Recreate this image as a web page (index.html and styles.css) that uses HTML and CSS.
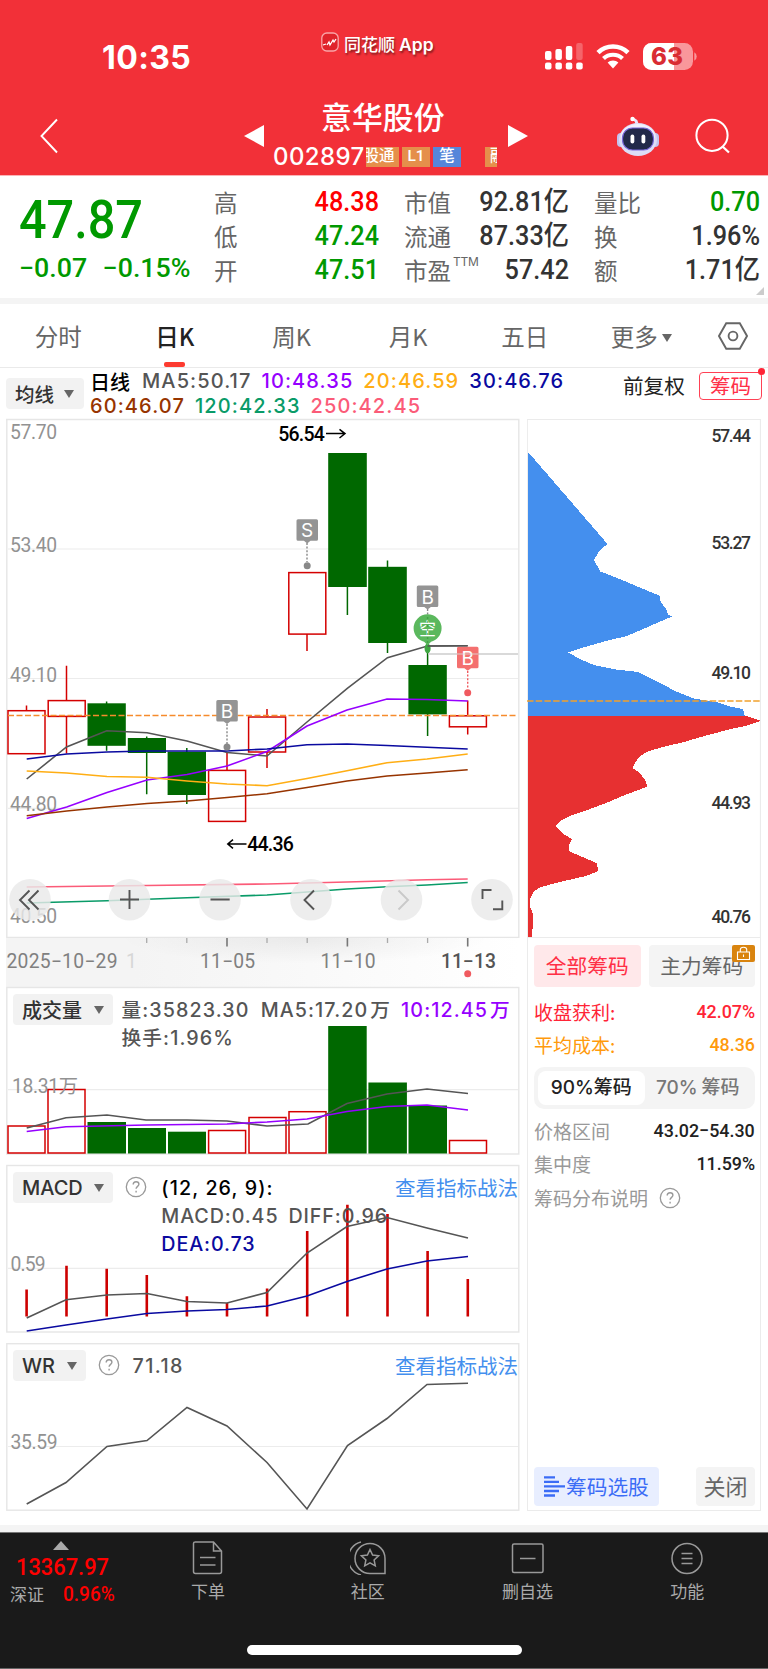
FILE: index.html
```html
<!DOCTYPE html>
<html lang="zh-CN">
<head>
<meta charset="UTF-8">
<meta name="viewport" content="width=device-width, initial-scale=1">
<title>意华股份 002897</title>
<link rel="stylesheet" href="styles.css">
</head>
<body>
<svg class="defs" width="0" height="0">
	<symbol id="help" viewBox="0 0 22 22">
		<circle cx="11" cy="11" r="9.7" fill="none" stroke="#999" stroke-width="1.3"/>
		<path d="M8.2 8.6c0-1.7 1.2-2.8 2.9-2.8s2.8 1 2.8 2.5c0 2-2.8 2.2-2.8 4.5M11.1 14.8v1.6" fill="none" stroke="#999" stroke-width="1.4"/>
	</symbol>
</svg>

<!-- red header -->
<div class="header">
	<div class="status">
		<span class="time">10:35</span>
		<div class="app">
			<svg width="18" height="20" viewBox="0 0 18 20"><rect x=".8" y="1" width="16.4" height="18" rx="5" fill="#e0232b" stroke="#f9a5a8" stroke-width="1.3"/><path d="M2 13l3-1M6 13l2-3 1 3 3-5 1 2 2-3" fill="none" stroke="#fff" stroke-width="1.3"/></svg>
			<span>同花顺<b>App</b></span>
		</div>
		<svg class="signal" width="39" height="27" viewBox="0 0 39 27" fill="#fff">
			<rect x="0" y="8" width="6.5" height="9" rx="2"/><rect x="10.4" y="6" width="6.5" height="11" rx="2"/><rect x="20.8" y="3" width="6.5" height="14" rx="2"/><rect x="31.2" y="0" width="6.5" height="17" rx="2" opacity=".25"/>
			<rect x="0" y="19.5" width="6.5" height="7" rx="2"/><rect x="10.4" y="19.5" width="6.5" height="7" rx="2"/><rect x="20.8" y="19.5" width="6.5" height="7" rx="2"/><rect x="31.2" y="19.5" width="6.5" height="7" rx="2"/>
		</svg>
		<svg class="wifi" width="34" height="25" viewBox="0 0 34 25">
			<path d="M2 8.6a21.5 21.5 0 0 1 30 0" fill="none" stroke="#fff" stroke-width="4.6"/>
			<path d="M7.5 14.6a13.6 13.6 0 0 1 19 0" fill="none" stroke="#fff" stroke-width="4.2"/>
			<path d="M11.6 18.6a7.8 7.8 0 0 1 10.8 0L17 24.4z" fill="#fff"/>
		</svg>
		<svg class="battery" width="54" height="27" viewBox="0 0 54 27">
			<rect width="50" height="27" rx="8.5" fill="#f9979b"/>
			<path d="M31 0H8.5A8.5 8.5 0 0 0 0 8.5v10A8.5 8.5 0 0 0 8.5 27H31z" fill="#fff"/>
			<path d="M51.3 9.2q2.4 1.2 2.4 4.3t-2.4 4.3z" fill="#f9979b"/>
			<text x="8" y="22" textLength="32" font-size="24" font-weight="800" fill="#d92c33">63</text>
		</svg>
	</div>
	<div class="titlebar">
		<svg class="back" width="20" height="36" viewBox="0 0 20 36"><path d="M18 1.5L2.5 18 18 34.5" fill="none" stroke="#fff" stroke-width="1.9"/></svg>
		<svg class="prev" width="20" height="22" viewBox="0 0 20 22"><path d="M20 0v22L0 11z" fill="#fff"/></svg>
		<div class="stock">
			<h1>意华股份</h1>
			<div class="code"><span class="code-num">002897</span><div class="tags"><span class="tag tag-cut"><i>股通</i></span><span class="tag">L1</span><span class="tag blue">笔</span><span class="tag tag-end">融</span></div></div>
		</div>
		<svg class="next" width="20" height="22" viewBox="0 0 20 22"><path d="M0 0v22L20 11z" fill="#fff"/></svg>
		<svg class="robot" width="44" height="42" viewBox="0 0 44 42">
			<path d="M20 9C22 5 19 4 17 3" fill="none" stroke="#e9e6fb" stroke-width="3" stroke-linecap="round"/>
			<circle cx="16.5" cy="3" r="2.2" fill="#fff"/>
			<rect x="1" y="17" width="8" height="14" rx="4" fill="#c3c2ee"/><rect x="35" y="17" width="8" height="14" rx="4" fill="#c3c2ee"/>
			<ellipse cx="22" cy="23.5" rx="19" ry="16.5" fill="#dddcf6"/>
			<ellipse cx="22" cy="21" rx="17" ry="13" fill="#f1f1fd"/>
			<rect x="6.5" y="12" width="31" height="22" rx="10" fill="#222949" stroke="#7766d8" stroke-width="1.2"/>
			<rect x="14.5" y="18.5" width="3.8" height="9" rx="1.9" fill="#fff"/><rect x="25.5" y="18.5" width="3.8" height="9" rx="1.9" fill="#fff"/>
		</svg>
		<svg class="search" width="36" height="36" viewBox="0 0 36 36"><circle cx="17" cy="17.3" r="15.6" fill="none" stroke="#fff" stroke-width="2"/><path d="M27.5 28.5l6.5 6" stroke="#fff" stroke-width="2.3"/></svg>
	</div>
</div>

<!-- quote -->
<div class="quote">
	<div class="price">
		<div class="last num green">47.87</div>
		<div class="change green"><span class="num">−0.07</span><span class="num">−0.15%</span></div>
	</div>
	<dl>
		<dt>高</dt><dd class="red">48.38</dd>
		<dt>低</dt><dd class="green">47.24</dd>
		<dt>开</dt><dd class="green">47.51</dd>
	</dl>
	<dl>
		<dt>市值</dt><dd>92.81亿</dd>
		<dt>流通</dt><dd>87.33亿</dd>
		<dt>市盈<sup>TTM</sup></dt><dd>57.42</dd>
	</dl>
	<dl>
		<dt>量比</dt><dd class="green">0.70</dd>
		<dt>换</dt><dd>1.96%</dd>
		<dt>额</dt><dd>1.71亿</dd>
	</dl>
	<i class="corner"></i>
</div>

<div class="tabs">
	<span>分时</span><span class="on">日K</span><span>周K</span><span>月K</span><span>五日</span><span>更多<i class="caret"></i></span>
	<svg width="30" height="28" viewBox="0 0 30 28"><path d="M8.2 1.2h13.6L29 14l-7.2 12.8H8.2L1 14z" fill="none" stroke="#666" stroke-width="1.9"/><circle cx="15" cy="14" r="4.4" fill="none" stroke="#666" stroke-width="1.9"/></svg>
</div>

<div class="ma-row">
	<span class="pick">均线<i class="caret"></i></span>
	<div class="ma-list">
		<div><span class="black cn">日线</span><span class="c5">MA5:50.17</span><span class="c10">10:48.35</span><span class="c20">20:46.59</span><span class="c30">30:46.76</span></div>
		<div><span class="c60">60:46.07</span><span class="c120">120:42.33</span><span class="c250">250:42.45</span></div>
	</div>
	<span class="adjust">前复权</span>
	<span class="chip">筹码</span>
</div>

<div class="main">
	<div class="left">
		<!-- k line -->
		<svg class="kline" width="513" height="519" viewBox="7 419 513 519">
			<path d="M6 419.5H518.8V937.5H6.8V419" fill="none" stroke="#e6e6e6" stroke-width="1.4"/>
			<path d="M8 549H518M8 678.5H518M8 808.3H518" stroke="#ececec" stroke-width="1.2"/>
			<g class="axis">
				<text x="10" y="439" textLength="47">57.70</text>
				<text x="10" y="551.5" textLength="47">53.40</text>
				<text x="10" y="681.5" textLength="47">49.10</text>
				<text x="10" y="811" textLength="47">44.80</text>
				<text x="10" y="923" textLength="47">40.50</text>
			</g>
			<g class="up">
				<path d="M26.5 705.5V711M66.5 665.7V701M66.5 716V753.5M227 753V770M267 709V717M267 752V768M307 634V651M467.7 700.5V716M467.7 727V734.5"/>
				<rect x="8" y="710.7" width="37" height="43"/>
				<rect x="48.2" y="700.6" width="37" height="15.8"/>
				<rect x="208.6" y="770.4" width="37" height="51"/>
				<rect x="248.6" y="717" width="37" height="35"/>
				<rect x="288.8" y="572.6" width="37" height="61.5"/>
				<rect x="449.4" y="715.8" width="37" height="11"/>
			</g>
			<g class="down">
				<path d="M106.6 701.5V750.7M146.7 736.5V794.3M186.8 748V804M347.4 587V615M387.5 560.5V653M427.6 650V736"/>
				<rect x="87.5" y="703.3" width="38.3" height="42.5"/>
				<rect x="127.8" y="738" width="38.2" height="15"/>
				<rect x="167.6" y="751.7" width="38.4" height="43.3"/>
				<rect x="328.2" y="453" width="38.6" height="134"/>
				<rect x="368.2" y="566.8" width="38.6" height="76.2"/>
				<rect x="408.4" y="665" width="38.4" height="49.4"/>
			</g>
			<path d="M428 654H518" stroke="#ccc" stroke-width="1.4"/>
			<path d="M8 715.5H518" stroke="#f68b2c" stroke-width="1.4" stroke-dasharray="6 2.5"/>
			<g class="line">
				<polyline stroke="#555" points="26.7,779 66.5,747 106.8,730.7 147,732.7 187,741 227,752.5 267,756 307,722 347.3,688.3 387.5,657.7 427.5,646 467.7,645.7"/>
				<polyline stroke="#9600ff" points="26.7,818.5 66.7,807 107,792.5 147,780 187,774.5 227,766 267,751.5 307,726 347,710 387,699 427,699.5 467.7,701"/>
				<polyline stroke="#ffae14" points="26.7,771 66.7,773 107,776.5 147,777.3 187,781 227,784 267,785.7 307,778.5 347,770.7 387,762.7 427,759 467.7,754"/>
				<polyline stroke="#0a0aa0" points="26.7,759 66.7,754 107,752 147,751 187,751 227,751 267,749 307,744.7 347,744 387,745.5 427,747.3 467.7,749"/>
				<polyline stroke="#973400" points="26.7,815.7 66.7,811 107,807 147,803.5 187,801 227,797.5 267,793.7 307,787.5 347,781 387,776 427,773 467.7,769.7"/>
				<polyline stroke="#fb5b78" points="26.7,887 147,885.5 267,884 347,882 427,879.8 467.7,879"/>
				<polyline stroke="#099b68" points="26.7,903 107,900.7 187,897.7 267,895 347,889 387,886.7 427,885 467.7,882.5"/>
			</g>
			<g class="peak">
				<text x="278.3" y="440.5" textLength="46.5">56.54</text>
				<path d="M326 433.6H345M339.5 429.3L345 433.6L339.5 438"/>
				<text x="247.3" y="851" textLength="46.5">44.36</text>
				<path d="M246.5 844H228M233 839.7L227.8 844L233 848.3"/>
			</g>
			<!-- trade marks -->
			<g class="mark">
				<path d="M307 543V562" stroke-dasharray="2 1.6"/><circle cx="307.2" cy="565.8" r="3.5"/>
				<path class="tagshape" d="M298 519.3h18.5a1.5 1.5 0 0 1 1.5 1.5v18.5a1.5 1.5 0 0 1-1.5 1.5H310.5l-3.3 2.6-3.3-2.6H298a1.5 1.5 0 0 1-1.5-1.5v-18.5a1.5 1.5 0 0 1 1.5-1.5z"/><text x="307.2" y="537.2">S</text>
				<path d="M227 724V744" stroke-dasharray="2 1.6"/><circle cx="227" cy="747" r="3.5"/>
				<path class="tagshape" d="M217.8 700h18.5a1.5 1.5 0 0 1 1.5 1.5v18.5a1.5 1.5 0 0 1-1.5 1.5H230.3l-3.3 2.6-3.3-2.6H217.8a1.5 1.5 0 0 1-1.5-1.5v-18.5a1.5 1.5 0 0 1 1.5-1.5z"/><text x="227" y="717.8">B</text>
				<path d="M427.6 609V616" stroke-dasharray="2 1.6"/>
				<path class="tagshape" d="M418.3 585.5h18.5a1.5 1.5 0 0 1 1.5 1.5v18.5a1.5 1.5 0 0 1-1.5 1.5H430.9l-3.3 2.6-3.3-2.6H418.3a1.5 1.5 0 0 1-1.5-1.5v-18.5a1.5 1.5 0 0 1 1.5-1.5z"/><text x="427.6" y="603.5">B</text>
			</g>
			<g class="mark short">
				<ellipse cx="427.6" cy="648.5" rx="3" ry="5"/>
				<path class="tagshape" d="M413.6 628.3a14 14 0 1 1 28 0c0 7-5 12-10.5 13.5l-3.5 3.5-3.5-3.5C418.6 640.3 413.6 635.3 413.6 628.3z"/>
				<text class="cn" x="427.6" y="634.5">空</text>
				<path d="M427.6 617V645" stroke="#38933b" stroke-dasharray="2 2" opacity=".6"/>
			</g>
			<g class="mark buy">
				<path d="M467.7 671V689" stroke-dasharray="2 1.6"/><circle cx="467.7" cy="692.7" r="3.5"/>
				<path class="tagshape" d="M458.5 646.7h18.5a1.5 1.5 0 0 1 1.5 1.5v18.5a1.5 1.5 0 0 1-1.5 1.5H471l-3.3 2.6-3.3-2.6H458.5a1.5 1.5 0 0 1-1.5-1.5v-18.5a1.5 1.5 0 0 1 1.5-1.5z"/><text x="467.7" y="664.5">B</text>
				<path class="cross" d="M457 654H478.5"/>
			</g>
			<path d="M427.6 646L467.7 645.7" stroke="#555" stroke-width="1.5"/>
			<!-- floating buttons -->
			<g class="fab">
				<circle cx="30" cy="899.7" r="20.8"/><circle cx="129.5" cy="899.7" r="20.8"/><circle cx="220" cy="899.7" r="20.8"/><circle cx="311" cy="899.7" r="20.8"/><circle cx="401.5" cy="899.7" r="20.8"/><circle cx="492" cy="899.7" r="20.8"/>
				<path d="M29.5 890.5L20 900L29.5 909.5M38.5 890.5L29 900L38.5 909.5M120 899.5H139M129.5 890V909M210.5 899.5H229.7M314 890.5L304.5 900L314 909.5"/>
				<path class="off" d="M398.5 890.5L408 900L398.5 909.5"/>
				<path d="M482.5 899V890H491.5M493 909.3H502.3V900.5"/>
			</g>
		</svg>

		<svg class="dates" width="513" height="49" viewBox="7 938 513 49">
			<defs>
				<linearGradient id="fade"><stop offset=".25" stop-color="#f4f4f4"/><stop offset="1" stop-color="#fff"/></linearGradient>
				<radialGradient id="shade" cx=".5" cy="0" r=".5" gradientTransform="scale(1 2)"><stop offset="0" stop-color="#000" stop-opacity=".06"/><stop offset="1" stop-color="#000" stop-opacity="0"/></radialGradient>
			</defs>
			<rect x="6" y="938" width="514" height="49" fill="url(#fade)"/>
			<rect x="120" y="938" width="370" height="26" fill="url(#shade)"/>
			<path d="M146.7 938V943M186.8 938V943M267 938V943M307.2 938V943M387.5 938V943M427.6 938V943" stroke="#aaa" stroke-width="1.3"/>
			<path d="M227 938V946.5M347.4 938V946.5M467.7 938V946.5" stroke="#777" stroke-width="1.6"/>
			<g class="axis dark">
				<text x="6.5" y="967.8" textLength="111">2025−10−29</text>
				<text x="126" y="967.8" opacity=".25">1</text>
				<text x="200" y="967.8" textLength="55">11−05</text>
				<text x="320.5" y="967.8" textLength="55">11−10</text>
				<text class="today" x="441" y="967.8" textLength="55">11−13</text>
			</g>
			<circle cx="467.7" cy="973.7" r="3.5" fill="#f05a5f"/>
		</svg>

		<!-- volume -->
		<div class="panel">
			<svg width="513" height="168" viewBox="7 987 513 168">
				<rect x="6.8" y="987.5" width="512" height="166.5" fill="none" stroke="#e6e6e6" stroke-width="1.4"/>
				<path d="M8 1089.7H518" stroke="#ececec" stroke-width="1.2"/>
				<g class="up">
					<rect x="8" y="1126" width="37" height="27"/><rect x="48" y="1089.5" width="37" height="63.5"/><rect x="208.6" y="1130.5" width="37" height="22.5"/><rect x="249" y="1117.5" width="37" height="35.5"/><rect x="289" y="1111.7" width="37" height="41.3"/><rect x="449.5" y="1140.5" width="37" height="12.5"/>
				</g>
				<g class="down">
					<rect x="87.5" y="1122" width="38.5" height="31.5"/><rect x="128" y="1128" width="38" height="25.5"/><rect x="168" y="1131.7" width="38" height="21.8"/><rect x="328.2" y="1026" width="38.5" height="127.5"/><rect x="368.4" y="1082.5" width="38.5" height="71"/><rect x="408.5" y="1105.5" width="38.5" height="48"/>
				</g>
				<g class="line">
					<polyline stroke="#555" points="26.7,1128 66,1117.7 107,1115 146,1120 187,1120 227,1121 267,1126 308,1124 347,1103.5 387,1094 427,1089 468,1093.5"/>
					<polyline stroke="#9600ff" points="26.7,1131.5 66,1126.7 147,1125 227,1124 267,1122 307,1119 347,1111.5 387,1106.5 427,1105 468,1110"/>
				</g>
				<g class="axis"><text x="12" y="1092.5" textLength="66">18.31万</text></g>
			</svg>
			<div class="panel-head">
				<span class="pick">成交量<i class="caret"></i></span>
				<div class="values vol"><div><span>量:35823.30</span><span>MA5:17.20<em>万</em></span><span class="c10">10:12.45<em>万</em></span></div><div>换手:1.96%</div></div>
			</div>
		</div>

		<!-- macd -->
		<div class="panel">
			<svg width="513" height="168" viewBox="7 1165 513 168">
				<rect x="6.8" y="1165.5" width="512" height="166.5" fill="none" stroke="#e6e6e6" stroke-width="1.4"/>
				<path d="M8 1268.3H518" stroke="#ececec" stroke-width="1.2"/>
				<path d="M26.6 1289.5V1316.5M66.5 1265.7V1316.5M106.7 1268.7V1316.5M146.8 1275V1316.5M186.9 1296.3V1316.5M227 1303V1316.5M267.1 1288.5V1316.5M307.2 1231V1316.5M347.4 1204.7V1316.5M387.5 1214V1316.5M427.6 1251V1316.5M467.8 1279V1316.5" stroke="#cd0000" stroke-width="2.6"/>
				<g class="line">
					<polyline stroke="#555" points="26.7,1318 66,1299.7 107,1295 147,1293.5 187,1301.5 227,1303 267,1292.5 307,1253 347,1226.5 387,1217.5 427,1228 468,1238"/>
					<polyline stroke="#0a0aa0" points="26.7,1331 66,1325 107,1319 147,1313.5 187,1311 227,1309.5 267,1306 307,1296 347,1281.5 387,1269 427,1261 468,1256.5"/>
				</g>
				<g class="axis"><text x="10.5" y="1270.5" textLength="35">0.59</text></g>
			</svg>
			<div class="panel-head">
				<span class="pick">MACD<i class="caret"></i></span>
				<svg class="help" width="22" height="22"><use href="#help"/></svg>
				<div class="values macd"><div class="black">(12, 26, 9):</div><div><span>MACD:0.45</span><span>DIFF:0.96</span></div><div class="c30">DEA:0.73</div></div>
				<a class="more">查看指标战法</a>
			</div>
		</div>

		<!-- wr -->
		<div class="panel">
			<svg width="513" height="168" viewBox="7 1343 513 168">
				<rect x="6.8" y="1343.7" width="512" height="166.5" fill="none" stroke="#e6e6e6" stroke-width="1.4"/>
				<path d="M8 1446.5H518" stroke="#ececec" stroke-width="1.2"/>
				<g class="line"><polyline stroke="#555" points="26.7,1504 66,1482.5 107,1446.5 147,1440.5 187,1407.5 227,1426 267,1462.5 307,1509 347.5,1445.5 387,1418.5 427,1384.5 468,1383.3"/></g>
				<g class="axis"><text x="10.5" y="1449" textLength="47">35.59</text></g>
			</svg>
			<div class="panel-head">
				<span class="pick">WR<i class="caret"></i></span>
				<svg class="help" width="22" height="22"><use href="#help"/></svg>
				<div class="values wr">71.18</div>
				<a class="more">查看指标战法</a>
			</div>
		</div>
	</div>

	<!-- chips -->
	<div class="right">
		<svg class="profile" width="234" height="519" viewBox="527 419 234 519">
			<polygon fill="#448fee" shape-rendering="crispEdges" points="527.7,453 529,453 607.5,544 600,550 593.7,560 600.5,571.5 613,576.5 627,582 641,588 653,593 659.5,595.5 659.5,600 666,609 668,614.5 672,616.5 650,626 627,636 606,641 585,647 568,652.5 580,659 594,665 616,669.5 638,672 650,678 668,687 672.7,690 694,698.5 718,702.5 730,706.5 743,709 745,716.5 527.7,716.5"/>
			<polygon fill="#e73031" shape-rendering="crispEdges" points="527.7,716 746,716 761,721 745,726 731,729 706,735.5 684,742 665,746.5 649,751 640,756 635,763 632.5,768 640,773 645,780 647.5,786.5 641,789 625,795 606,803 590,809 570,816 560,821 555.7,826 565,835 572,839 569,845 568.5,851 580,856 596.5,863 598.5,870 596,872 586,876 560,882 541,887 534,891 530.5,898 530.3,907 533,914 533.5,924 532,932 531.5,938 527.7,938"/>
			<path d="M527 937.5H760M527.3 938V419.5H760.5V938" fill="none" stroke="#ebebeb" stroke-width="1.2"/>
			<path d="M527 701H760" stroke="#f1a12d" stroke-width="1.5" stroke-dasharray="6.5 2.2"/>
			<g class="level">
				<text x="711.5" y="442" textLength="39.5">57.44</text><text x="711.5" y="549" textLength="39.5">53.27</text><text x="711.5" y="679" textLength="39.5">49.10</text><text x="711.5" y="808.5" textLength="39.5">44.93</text><text x="711.5" y="922.5" textLength="39.5">40.76</text>
			</g>
		</svg>
		<div class="chips">
			<div class="kinds">
				<span class="kind on">全部筹码</span>
				<span class="kind">主力筹码<svg class="lock" width="23" height="17" viewBox="0 0 23 17"><path d="M2 0H21a2 2 0 0 1 2 2V15a2 2 0 0 1-2 2H2a2 2 0 0 1-2-2V2a2 2 0 0 1 2-2z" fill="#d9840f"/><path d="M5.5 7h12v7.5h-12zM8.3 7V4.6a3.2 2.4 0 0 1 6.4 0V7M11.5 9.5v2.5" fill="none" stroke="#fff" stroke-width="1.1"/></svg></span>
			</div>
			<div class="row hot"><span>收盘获利:</span><b>42.07%</b></div>
			<div class="row warm"><span>平均成本:</span><b>48.36</b></div>
			<div class="seg"><span class="on">90%筹码</span><span>70%<em>筹码</em></span></div>
			<div class="row"><span>价格区间</span><b>43.02−54.30</b></div>
			<div class="row"><span>集中度</span><b>11.59%</b></div>
			<div class="row note"><span>筹码分布说明</span><svg width="22" height="22"><use href="#help"/></svg></div>
			<div class="actions">
				<span class="pickstock"><svg width="21" height="21" viewBox="0 0 21 21"><path d="M0 1.3H11M0 5.8H15M0 10.4H21M0 15H15M0 19.5H11" stroke="#3b6cf6" stroke-width="2.3"/></svg>筹码选股</span>
				<span class="close">关闭</span>
			</div>
		</div>
	</div>
</div>

<!-- bottom bar -->
<div class="nav">
	<div class="index">
		<i class="tri"></i>
		<div class="num idx">13367.97</div>
		<div class="idx-row"><span>深证</span><span class="num">0.96%</span></div>
	</div>
	<div class="item"><svg width="36" height="34" viewBox="0 0 36 34"><path d="M4.5 1H23.5L31.5 10V30.5a2 2 0 0 1-2 2H5.5a2 2 0 0 1-2-2V2.5a1.5 1.5 0 0 1 1.5-1.5M23.5 1V10H31.5M10 16.5H25.5M10 24H25.5"/></svg>下单</div>
	<div class="item"><svg width="36" height="34" viewBox="0 0 36 34"><path d="M20 2.5A15 15 0 1 0 20 32.5H35V17.5A15 15 0 0 0 20 2.5zM11 1A17 17 0 0 0 11 34M20 8.5l2.6 5.6 6 .7-4.5 4.1 1.2 6-5.3-3-5.3 3 1.2-6-4.5-4.1 6-.7z"/></svg>社区</div>
	<div class="item"><svg width="36" height="34" viewBox="0 0 36 34"><path d="M5 3H32.5a1.5 1.5 0 0 1 1.5 1.5V30A1.5 1.5 0 0 1 32.5 31.5H5A1.5 1.5 0 0 1 3.5 30V4.5A1.5 1.5 0 0 1 5 3zM11 17.5H26.5"/></svg>删自选</div>
	<div class="item"><svg width="36" height="34" viewBox="0 0 36 34"><circle cx="18" cy="17.5" r="15"/><path d="M12.5 12.5H23.5M12.5 17.5H23.5M12.5 22.5H23.5"/></svg>功能</div>
</div>
<div class="home"><i></i></div>
</body>
</html>
```

FILE: styles.css
```css
* { box-sizing: border-box; }

body {
	margin: 0;
	width: 768px;
	background: #fff;
	color: #333;
	font-family: Inter, "Noto Sans CJK SC", sans-serif;
	overflow-x: hidden;
}
svg { display: block; flex: none; }
i, em { font-style: normal; }
.defs { position: absolute; }
.cn { font-family: "Noto Sans CJK SC", sans-serif; }

.num, .quote dd, .row b { font-family: Roboto, "Noto Sans CJK SC", sans-serif; }
.green { color: #009900; }
.red { color: #ff0000; }
.black { color: #000; }
.c5 { color: #555; }
.c10 { color: #9600ff; }
.c20 { color: #ffae14; }
.c30 { color: #0a0aa0; }
.c60 { color: #973400; }
.c120 { color: #099b68; }
.c250 { color: #fb5b78; }

.caret {
	display: inline-block;
	border: 5.5px solid transparent;
	border-top: 8px solid #666;
	border-bottom: 0;
}

/* header */
.header {
	height: 176px;
	background: #f23038;
	border-bottom: 1px solid #fbb3b6;
	color: #fff;
}
.status {
	height: 98px;
	display: flex;
	align-items: flex-start;
	padding-left: 102px;
}
.time {
	width: 219px;
	padding-top: 39px;
	font-size: 32px;
	line-height: 38px;
	font-weight: 700;
	letter-spacing: .4px;
}
.app {
	width: 224px;
	padding-top: 32px;
	display: flex;
	gap: 5px;
	font: 500 17px/24px "Noto Sans CJK SC", sans-serif;
	text-shadow: 1px 2px 2px rgba(0,0,0,.45);
}
.app b { font: 600 17.5px Inter, sans-serif; margin-left: 4px; }
.signal { margin-top: 43px; }
.wifi { margin: 44px 0 0 12px; }
.battery { margin: 43px 0 0 13px; }
.titlebar {
	display: flex;
	align-items: flex-start;
	padding-left: 39px;
}
.back { margin-top: 20px; }
.prev { margin: 27px 0 0 185px; }
.stock { width: 244px; padding-left: 9px; }
.stock h1 {
	margin: -2px 0 0;
	font: 500 30.9px/40px "Noto Sans CJK SC", sans-serif;
	padding-left: 48px;
}
.code { display: flex; margin-top: 10px; }
.code-num {
	width: 93px;
	font-size: 24px;
	line-height: 22px;
	font-weight: 500;
	letter-spacing: .4px;
}
.tags { display: flex; gap: 3px; padding-top: 1px; width: 132px; overflow: hidden; }
.tag {
	flex: none;
	width: 28px;
	height: 20px;
	background: #e58f4b;
	font: 500 15.5px/19px Roboto, "Noto Sans CJK SC", sans-serif;
	text-align: center;
}
.tag-cut { width: 33px; overflow: hidden; }
.tag-cut i { display: block; width: 34px; margin-left: -4px; }
.tag.blue { background: #5686da; }
.tag-end { width: 12px; margin-left: 21px; overflow: hidden; text-align: left; text-indent: 5px; white-space: nowrap; }
.next { margin-top: 27px; }
.robot { margin: 18px 0 0 88px; }
.search { margin: 20px 0 0 35px; }

/* quote */
.quote {
	height: 128px;
	border-bottom: 6px solid #f4f4f4;
	display: grid;
	grid-template-columns: 168px 165px 165px 166px;
	column-gap: 25px;
	padding-left: 21px;
	position: relative;
}
.last {
	font-size: 54px;
	font-weight: 500;
	line-height: 60px;
	margin: 14px 0 0 -2px;
	transform: scaleX(.9);
	transform-origin: left;
}
.change {
	display: flex;
	gap: 15px;
	font-size: 26px;
	line-height: 34px;
	margin: 1px 0 0 -2px;
	transform: scaleX(1.03);
	transform-origin: left;
}
.change .num { font-weight: 500; }
.quote dl {
	margin: 9px 0 0;
	display: grid;
	grid-template-columns: 48px 1fr;
	grid-auto-rows: 34px;
	font-size: 23.5px;
	line-height: 34px;
}
.quote dt { font-family: "Noto Sans CJK SC", sans-serif; color: #666; white-space: nowrap; }
.quote dt sup { font: 12px/12px Inter, sans-serif; letter-spacing: -.2px; margin-left: 2px; vertical-align: 14px; }
.quote dd {
	margin: 0;
	font-size: 27.3px;
	font-weight: 500;
	text-align: right;
	white-space: nowrap;
	transform: scaleX(.925);
	transform-origin: right;
}
.corner {
	position: absolute;
	right: 4px;
	bottom: 3px;
	border: 4.5px solid #ccc;
	border-left-color: transparent;
	border-top-color: transparent;
}

/* tabs */
.tabs {
	height: 64px;
	display: grid;
	grid-template-columns: repeat(6, 116.6px) 1fr;
	align-items: center;
	justify-items: center;
	border-bottom: 1px solid #eaeaea;
	font: 23.5px/62px "Noto Sans CJK SC", sans-serif;
	color: #666;
}
.tabs .on { color: #222; font-weight: 500; position: relative; }
.tabs .on::after {
	content: "";
	position: absolute;
	left: 50%;
	bottom: 0;
	width: 21px;
	height: 5px;
	margin-left: -11px;
	border-radius: 2px;
	background: #fd3b30;
}
.tabs .caret { margin-left: 4px; vertical-align: 4px; }
.tabs svg { margin-right: 1px; }

/* averages */
.ma-row { height: 51px; display: flex; padding-left: 6px; }
.pick {
	flex: none;
	height: 31px;
	padding: 0 9px;
	border-radius: 4px;
	background: #f2f2f2;
	display: flex;
	align-items: center;
	gap: 11.5px;
	font-size: 20px;
	font-weight: 500;
	white-space: nowrap;
}
.ma-row .pick { width: 78px; margin-top: 10px; font-size: 19.5px; gap: 10px; }
.ma-list { margin-left: 6px; padding-top: 1px; width: 533px; font-size: 20px; font-weight: 500; line-height: 25px; letter-spacing: 1.1px; }
.ma-list div { display: flex; gap: 10px; }
.ma-list .cn { letter-spacing: 0; margin-right: 2px; }
.adjust { font: 20.6px/34px "Noto Sans CJK SC", sans-serif; color: #222; width: 76px; }
.chip {
	position: relative;
	width: 63px;
	height: 28px;
	margin-top: 4px;
	border: 1.5px solid #ff4155;
	border-radius: 4px;
	font: 20.5px/24px "Noto Sans CJK SC", sans-serif;
	color: #ff3048;
	text-align: center;
}
.chip::after {
	content: "";
	position: absolute;
	top: -5px;
	right: -4px;
	width: 7px;
	height: 7px;
	border-radius: 50%;
	background: #ff2436;
}

/* charts */
.main { display: flex; gap: 7px; padding-left: 7px; height: 1106px; }
.left { width: 513px; }
.left svg { overflow: visible; }
text { font-family: Roboto, "Noto Sans CJK SC", sans-serif; }
.battery text { font-family: Inter, sans-serif; }
.axis text { font-size: 19.3px; fill: #929292; }
.dark text { fill: #808080; }
.axis .today { fill: #555; font-weight: 500; }
.level text { font-size: 17.5px; fill: #333; font-weight: 500; }
.peak text { font-size: 19.5px; font-weight: 500; fill: #000; }
.peak path { fill: none; stroke: #000; stroke-width: 1.5; }
.up { fill: none; stroke: #d40000; stroke-width: 1.5; }
.down { fill: #006800; }
.down path { stroke: #006800; stroke-width: 1.5; }
.line polyline { fill: none; stroke-width: 1.6; }
.mark { fill: #888; stroke: #888; stroke-width: 1.4; }
.mark circle, .mark ellipse, .mark .tagshape { stroke: none; }
.mark .tagshape { fill: #949494; }
.mark text { font-family: Inter, sans-serif; font-size: 19px; fill: #fff; stroke: none; text-anchor: middle; }
.short { fill: #3fa642; }
.short .tagshape { fill: #5bb85d; }
.short text { font-size: 17px; font-family: "Noto Sans CJK SC", sans-serif; }
.buy { fill: #f05a5f; stroke: #f05a5f; }
.buy .tagshape { fill: #f4706f; }
.buy .cross { stroke: #ddd; opacity: .6; }
.fab circle { fill: #e9e9e9; fill-opacity: .82; }
.fab path { fill: none; stroke: #555; stroke-width: 1.9; }
.fab .off { stroke: #c9c9c9; }

.panel { display: grid; margin-bottom: 10px; }
.panel > * { grid-area: 1 / 1; }
.panel-head {
	display: flex;
	align-items: flex-start;
	padding: 7px 2px 0 6px;
}
.help { margin: 4px 0 0 12px; }
.values { font-size: 19.7px; font-weight: 500; line-height: 28px; letter-spacing: 1.1px; color: #555; padding-top: 2px; white-space: nowrap; }
.values div { display: flex; gap: 10px; }
.vol { margin-left: 9px; }
.vol em { margin-left: 2px; letter-spacing: 0; }
.vol div { gap: 11px; }
.macd { margin-left: 14px; letter-spacing: .9px; }
.macd .black { letter-spacing: 1.1px; }
.wr { margin-left: 13px; letter-spacing: 1.4px; }
.more { margin-left: auto; font: 20.5px/31px "Noto Sans CJK SC", sans-serif; color: #448fee; }

/* chip distribution */
.right { width: 234px; height: 1092px; display: flex; flex-direction: column; }
.chips {
	flex: 1;
	display: flex;
	flex-direction: column;
	border: 1px solid #ebebeb;
	border-top: 0;
	padding: 7px 5px 4px 6px;
	font-family: "Noto Sans CJK SC", sans-serif;
}
.kinds { display: flex; gap: 8px; margin-bottom: 8px; }
.kind {
	position: relative;
	width: 107px;
	height: 42px;
	border-radius: 4px;
	background: #f4f4f4;
	font-size: 20.7px;
	line-height: 41px;
	text-align: center;
	color: #666;
}
.kind.on { background: #ffe8ea; color: #ff2f45; }
.lock { position: absolute; top: 0; right: 0; }
.row {
	height: 33px;
	display: flex;
	align-items: center;
	justify-content: space-between;
	font-size: 19px;
	line-height: 33px;
	color: #999;
}
.row b { font-weight: 500; font-size: 19.2px; color: #222; transform: scaleX(.93); transform-origin: right; }
.hot, .hot b { color: #ff2436; }
.warm, .warm b { color: #ff9a0c; }
.seg {
	height: 42px;
	margin: 6px 0 5px;
	padding: 4px;
	border-radius: 10px;
	background: #f4f4f4;
	display: flex;
	font: 500 19px/34px Inter, "Noto Sans CJK SC", sans-serif;
	color: #777;
}
.seg span { flex: 1; text-align: center; white-space: nowrap; }
.seg em { margin-left: 4px; }
.seg .on { background: #fff; border-radius: 8px; color: #222; }
.note { justify-content: flex-start; gap: 11px; height: 35px; }
.actions { margin-top: auto; display: flex; justify-content: space-between; }
.actions span { height: 39px; border-radius: 4px; line-height: 37px; }
.pickstock {
	width: 125px;
	padding-left: 10px;
	display: flex;
	align-items: center;
	gap: 1px;
	background: #e8eeff;
	color: #3b6cf6;
	font-size: 20.7px;
}
.close { width: 59px; background: #f4f4f4; text-align: center; font-size: 22px; color: #666; }

/* bottom bar */
.nav {
	height: 92px;
	background: #1a1a1a;
	border-top: 1px solid #777;
	outline: 7px solid #f4f4f4;
	clip-path: inset(-7px 0 0 0);
	display: grid;
	grid-template-columns: 128px repeat(4, 159.8px);
	margin-top: 7px;
}
.index { padding: 8px 0 0 10px; color: #ff0000; }
.tri {
	display: block;
	width: 0;
	margin-left: 43px;
	border: 8px solid transparent;
	border-top: 0;
	border-bottom: 9px solid #aaa;
}
.idx { font-size: 24px; font-weight: 500; line-height: 26px; margin: 4px 0 0 6px; transform: scaleX(.91); transform-origin: left; }
.idx-row { display: flex; gap: 19px; font: 17px/24px "Noto Sans CJK SC", sans-serif; margin-top: 2px; }
.idx-row span:first-child { color: #aaa; }
.idx-row .num { font-size: 20px; font-weight: 500; transform: scaleX(.95); transform-origin: left; }
.item {
	display: flex;
	flex-direction: column;
	align-items: center;
	gap: 3px;
	padding: 8px 0 0 0;
	font: 17px/26px "Noto Sans CJK SC", sans-serif;
	color: #aaa;
}
.item svg { fill: none; stroke: #999; stroke-width: 1.5; }
.home {
	height: 45px;
	background: #1a1a1a;
	border-bottom: 1px solid #666;
	padding: 21px 0 0 247px;
}
.home i { display: block; width: 275px; height: 10px; border-radius: 5px; background: #fff; }
```
